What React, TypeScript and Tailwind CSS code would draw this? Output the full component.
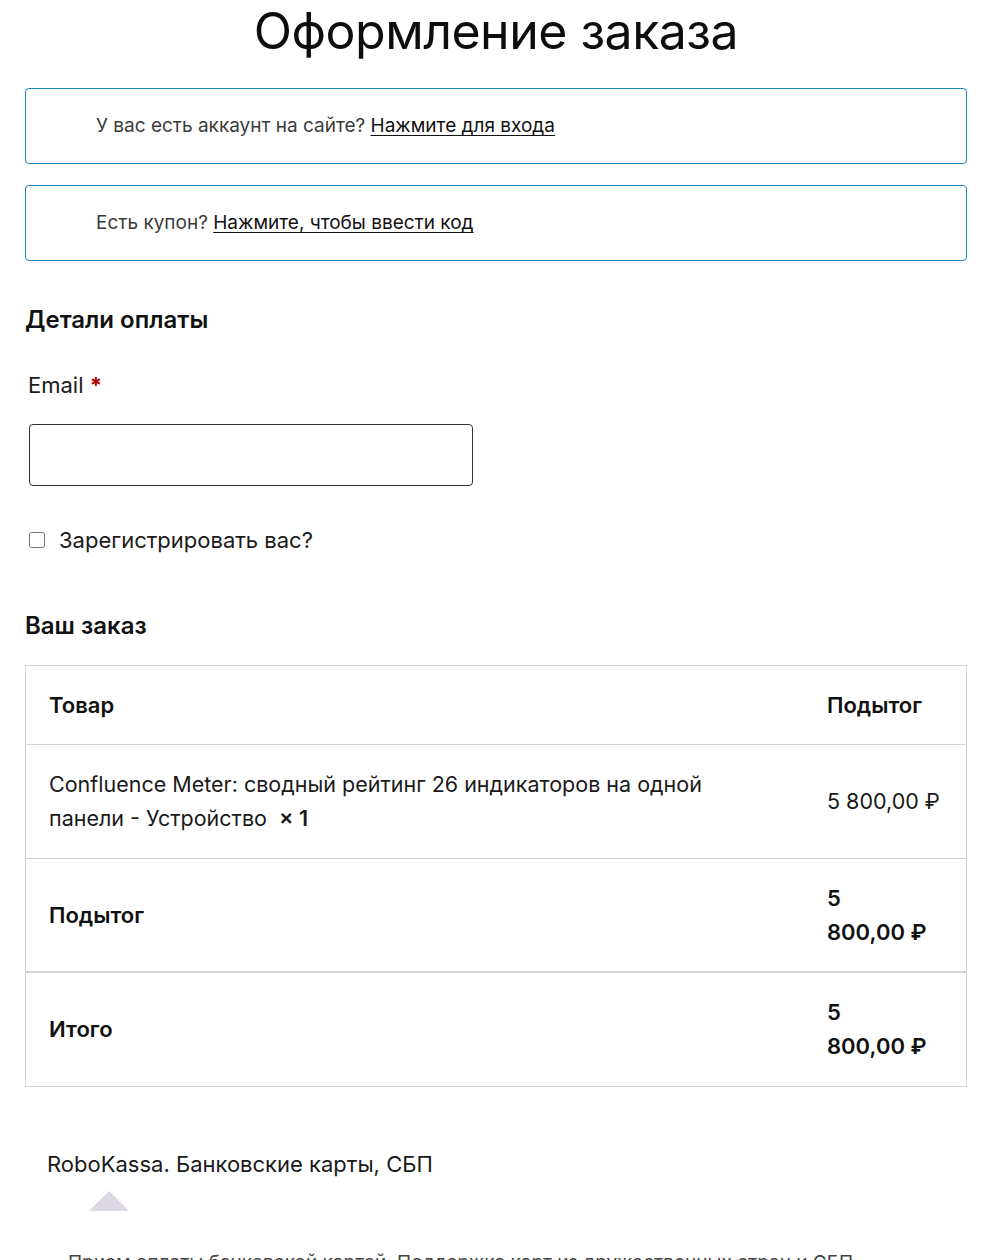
import React from "react";

const font = { fontFamily: "Inter, 'Noto Sans', sans-serif" };

const Notice = ({ text, link }: { text: string; link: string }) => (
  <div className="mt-[21px] first:mt-0 rounded-[4px] border border-[#1e85be] py-[23px] pl-[70px] pr-6 text-[19px] leading-[28px] text-[#3b3b3b]">
    {text}{" "}
    <a href="#" className="text-[#111] underline underline-offset-[3px]">
      {link}
    </a>
  </div>
);

const Row = ({
  left,
  right,
  bold,
  thick,
}: {
  left: React.ReactNode;
  right: React.ReactNode;
  bold?: boolean;
  thick?: boolean;
}) => {
  const txt = bold
    ? "text-[22px] font-semibold text-[#111]"
    : "text-[21.5px] text-[#1a1a1a]";
  const pad = thick ? "pt-[22px] pb-[23px]" : bold ? "pt-[22px] pb-[22px]" : "pt-[22px] pb-[23px]";
  return (
    <div
      className={
        "grid grid-cols-[1fr_162px] border-[#d3d3d3] " +
        (thick ? "border-t-2" : "border-t")
      }
    >
      <div className={"flex items-center pl-[23px] pr-[80px] leading-[34px] " + pad + " " + txt}>
        <div>{left}</div>
      </div>
      <div className={"flex items-center pl-[23px] pr-3 leading-[34px] " + pad + " " + txt}>
        <div>{right}</div>
      </div>
    </div>
  );
};

export default function App() {
  return (
    <div className="min-h-screen bg-white px-[25px] text-[#111]" style={font}>
      <h1 className="text-center text-[50px] leading-[62px] font-normal tracking-[-0.5px] text-[#0d0d0d]">
        Оформление заказа
      </h1>

      <div className="mt-[26px]">
        <Notice text="У вас есть аккаунт на сайте?" link="Нажмите для входа" />
        <Notice text="Есть купон?" link="Нажмите, чтобы ввести код" />
      </div>

      <h3 className="mt-[43px] text-[24px] leading-[32px] font-semibold">
        Детали оплаты
      </h3>

      <label className="mt-[34px] block pl-[3px] text-[22px] leading-[30px] text-[#1a1a1a]">
        Email <span className="font-bold text-[#aa0000]">*</span>
      </label>
      <input
        type="email"
        className="mt-[24px] ml-[4px] block h-[62px] w-[444px] rounded-[4px] border border-[#3b3030] px-3 text-[18px] outline-none"
      />

      <label className="mt-[39px] flex items-center gap-[14px] pl-[4px] text-[22px] leading-[30px] text-[#1a1a1a]">
        <input type="checkbox" className="h-4 w-4" />
        Зарегистрировать вас?
      </label>

      <h3 className="mt-[55px] text-[24px] leading-[32px] font-semibold">
        Ваш заказ
      </h3>

      <div className="mt-[23px] border-x border-b border-[#d3d3d3]">
        <Row left="Товар" right="Подытог" bold />
        <Row
          left={
            <>
              Confluence Meter: сводный рейтинг 26 индикаторов на одной панели - Устройство&nbsp;&nbsp;
              <strong className="font-semibold">× 1</strong>
            </>
          }
          right="5 800,00 ₽"
        />
        <Row
          left="Подытог"
          right={
            <>
              5
              <br />
              800,00 ₽
            </>
          }
          bold
        />
        <Row
          left="Итого"
          right={
            <>
              5
              <br />
              800,00 ₽
            </>
          }
          bold
          thick
        />
      </div>

      <div className="mt-[62px] pl-[22px] text-[22px] leading-[30px] text-[#1a1a1a]">
        RoboKassa. Банковские карты, СБП
      </div>
      <div className="ml-[64px] mt-[12px] h-0 w-0 border-x-[20px] border-b-[20px] border-x-transparent border-b-[#dcd7e3]" />
      <p className="mt-[38px] pl-[43px] text-[19px] leading-[28px] text-[#444]">
        Прием оплаты банковской картой. Поддержка карт из дружественных стран и
        СБП.
      </p>
    </div>
  );
}
